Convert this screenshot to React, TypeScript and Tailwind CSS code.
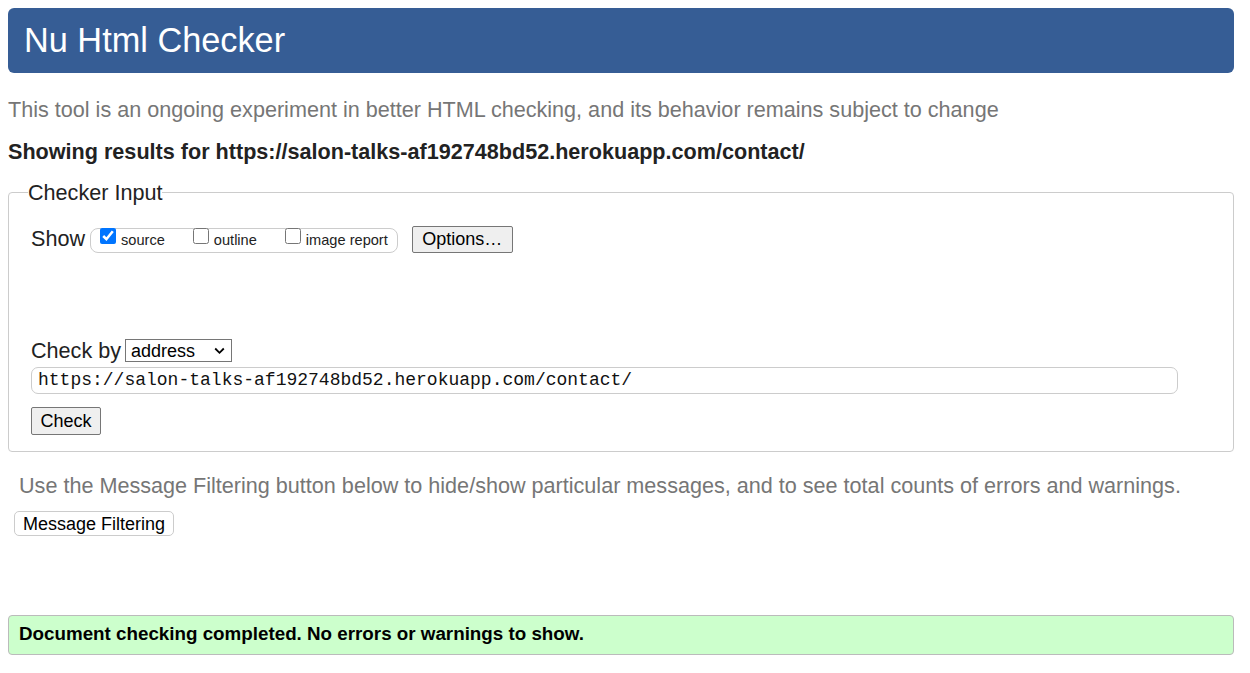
import React from "react";

export default function App() {
  return (
    <div className="min-h-[673px] bg-white pb-2 pl-2 pr-4 pt-2 text-[#222] font-['Liberation_Sans',Arial,sans-serif]">
      <header className="flex h-[65px] items-center rounded-md bg-[#365d95] pl-4">
        <h1 className="text-[34.3px] font-normal leading-none text-white">Nu Html Checker</h1>
      </header>

      <p className="mt-[24px] text-[21.6px] leading-[25px] text-[#767676]">
        This tool is an ongoing experiment in better HTML checking, and its behavior remains subject to change
      </p>
      <p className="mt-[17px] text-[21.6px] font-bold leading-[25px] text-[#222]">
        Showing results for https://salon-talks-af192748bd52.herokuapp.com/contact/
      </p>

      <fieldset className="mt-[16px] rounded border border-[#cccccc] pb-4 pl-[19px] pr-[55px]">
        <legend className="text-[21.6px] leading-[25px] text-[#222]">Checker Input</legend>
        <div className="pl-[3px]">
          <div className="mt-[21px] flex h-[26px] items-center">
            <span className="text-[21.6px] leading-none">Show</span>
            <div className="ml-[5px] mt-[2px] flex h-[25px] items-center rounded-lg border border-[#cccccc] pl-[9px] pr-[9px] text-[14.6px]">
              <label className="flex items-center">
                <input type="checkbox" defaultChecked className="m-0 h-4 w-4 -translate-y-[4px] accent-[#0075ff]" />
                <span className="ml-[5px] translate-y-[1px]">source</span>
              </label>
              <label className="ml-[28px] flex items-center">
                <input type="checkbox" className="m-0 h-4 w-4 -translate-y-[4px]" />
                <span className="ml-[5px] translate-y-[1px]">outline</span>
              </label>
              <label className="ml-[28px] flex items-center">
                <input type="checkbox" className="m-0 h-4 w-4 -translate-y-[4px]" />
                <span className="ml-[5px] translate-y-[1px]">image report</span>
              </label>
            </div>
            <button className="ml-[14px] h-[27px] w-[101px] rounded-[2px] border border-[#767676] bg-[#efefef] text-[18px] leading-none text-black">
              Options…
            </button>
          </div>

          <div className="mt-[87px] flex h-[23px] items-center">
            <span className="text-[21.6px] leading-none">Check by</span>
            <div className="relative ml-[4px] h-[23px] w-[107px] border border-[#767676] bg-white">
              <select className="h-full w-full appearance-none bg-transparent pl-[5px] text-[18px] leading-none text-black outline-none">
                <option>address</option>
              </select>
              <svg className="pointer-events-none absolute right-[6px] top-[7px]" width="11" height="8" viewBox="0 0 11 8">
                <path d="M1.2 1.5 L5.5 5.8 L9.8 1.5" fill="none" stroke="#000" strokeWidth="1.8" />
              </svg>
            </div>
          </div>

          <div className="mt-[5px]">
            <input
              type="text"
              defaultValue="https://salon-talks-af192748bd52.herokuapp.com/contact/"
              className="h-[27px] w-full rounded-[7px] border border-[#cccccc] px-[6px] font-['Liberation_Mono','Courier_New',monospace] text-[18px] text-[#111] outline-none"
            />
          </div>

          <button className="mt-[13px] h-[28px] w-[70px] rounded-[2px] border border-[#767676] bg-[#efefef] text-[18px] leading-none text-black">
            Check
          </button>
        </div>
      </fieldset>

      <p className="ml-[11px] mt-[21px] text-[21.6px] leading-[25px] text-[#767676]">
        Use the Message Filtering button below to hide/show particular messages, and to see total counts of errors and warnings.
      </p>
      <button className="ml-[6px] mt-[13px] h-[25px] w-[160px] rounded-[5px] border border-[#cccccc] bg-white text-[18px] leading-none text-black">
        Message Filtering
      </button>

      <div className="mt-[78px] flex h-[40px] items-center rounded border border-[#bbbbbb] bg-[#ccffcc] pl-[10px]">
        <span className="text-[18.8px] font-bold text-black">Document checking completed. No errors or warnings to show.</span>
      </div>
    </div>
  );
}
